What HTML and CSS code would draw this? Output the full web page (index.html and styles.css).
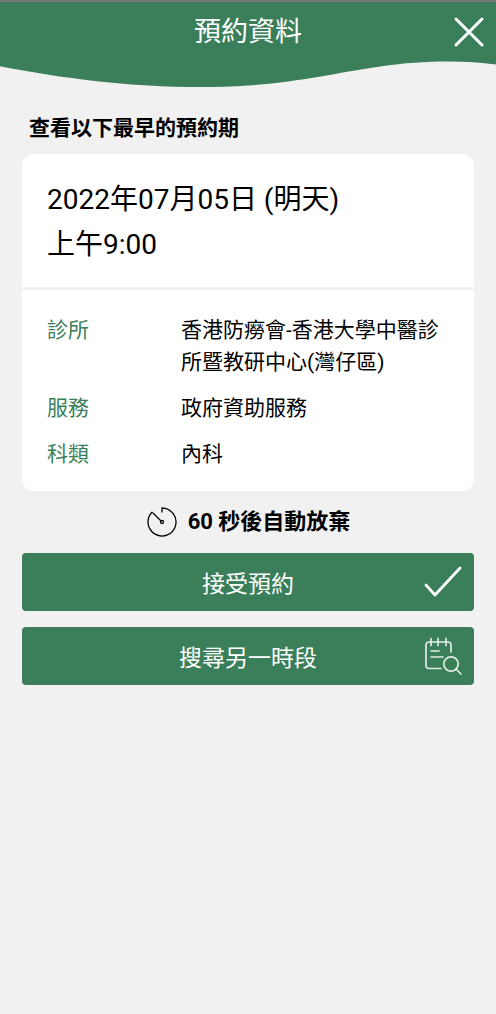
FILE: index.html
```html
<!DOCTYPE html>
<html lang="zh-Hant">
<head>
<meta charset="utf-8">
<meta name="viewport" content="width=device-width, initial-scale=1">
<title>預約資料</title>
<link rel="stylesheet" href="styles.css">
</head>
<body>
<header class="header">
  <div class="bar">
    <h1 class="title">預約資料</h1>
    <button class="close" type="button" aria-label="關閉">
      <svg width="32" height="32" viewBox="0 0 32 32" fill="none" stroke="currentColor" stroke-width="3" stroke-linecap="round"><path d="M3 3L29 29M29 3L3 29"/></svg>
    </button>
  </div>
  <svg class="wave" viewBox="0 0 496 28" preserveAspectRatio="none" aria-hidden="true"><path d="M0 0H496V4.500C465 .5 425 0 380 6.500C335 13 300 22 248 25.500C165 31 75 21 0 6.200Z"/></svg>
</header>
<main class="content">
  <h2 class="subtitle">查看以下最早的預約期</h2>
  <section class="card">
    <p class="when">2022年07月05日 (明天)<br>上午9:00</p>
    <dl class="details">
      <dt>診所</dt><dd>香港防癆會-香港大學中醫診所暨教研中心(灣仔區)</dd>
      <dt>服務</dt><dd>政府資助服務</dd>
      <dt>科類</dt><dd>內科</dd>
    </dl>
  </section>
  <p class="timer">
    <svg width="32" height="32" viewBox="0 0 32 32" fill="none" stroke="currentColor" stroke-width="1.300" stroke-linecap="round" stroke-linejoin="round" aria-hidden="true"><path d="M16 6V2A14 14 0 1 1 6 6.200"/><path d="M7 7L15 15"/><circle cx="16" cy="16" r="1.500"/></svg>
    <span>60 秒後自動放棄</span>
  </p>
  <div class="actions">
    <button class="action" type="button">
      <span>接受預約</span>
      <svg width="38" height="38" viewBox="0 0 38 38" fill="none" stroke="currentColor" stroke-width="2.800" stroke-linecap="round" stroke-linejoin="round" aria-hidden="true"><path d="M2 22L11 32L36 5"/></svg>
    </button>
    <button class="action" type="button">
      <span>搜尋另一時段</span>
      <svg width="38" height="38" viewBox="0 0 38 38" fill="none" stroke="currentColor" stroke-opacity=".85" stroke-width="1.700" stroke-linecap="round" stroke-linejoin="round" aria-hidden="true"><path d="M17 31.500H5Q2 31.500 2 28.500V8Q2 5 5 5H24Q27 5 27 8V15M7 1.500V8.500M14 1.500V8.500M22 1.500V8.500M7 14H15M7 20H19"/><circle cx="27" cy="27" r="7.200"/><path d="M32 32L37 37"/></svg>
    </button>
  </div>
</main>
</body>
</html>
```

FILE: styles.css
```css
* {
  box-sizing: border-box;
}

body {
  margin: 0;
  background: #f1f1f1;
  color: #000;
  font-family: Roboto, "Noto Sans CJK TC", sans-serif;
  font-size: 21px;
  line-height: 32px;
}

h1, h2, p, dl, dd {
  margin: 0;
}

svg {
  display: block;
}

button {
  border: 0;
  color: #fff;
  font-family: inherit;
  cursor: pointer;
}

.header {
  border-top: 2px solid #777;
}

.bar {
  display: grid;
  grid-template-columns: 48px 1fr 48px;
  align-items: center;
  height: 58px;
  padding: 2px 3px 0;
  background: #3b7f5a;
  color: #fff;
}

.title {
  grid-column: 2;
  font-size: 27px;
  font-weight: 400;
  text-align: center;
}

.close {
  display: grid;
  place-items: center;
  height: 48px;
  padding: 0;
  background: none;
}

.wave {
  width: 100%;
  height: 28px;
  fill: #3b7f5a;
}

.content {
  padding: 24px 22px;
}

.subtitle {
  padding: 0 7px;
  font-size: 21px;
  font-weight: 700;
}

.card {
  margin-top: 10px;
  border-radius: 12px;
  background: #fff;
}

.when {
  padding: 23px 25px 20px;
  border-bottom: 3px solid #f1f1f1;
  font-size: 28px;
  line-height: 45px;
}

.details {
  display: grid;
  grid-template-columns: 134px 1fr;
  row-gap: 14px;
  padding: 24px 25px 21px;
}

.details dt {
  color: #3b7f5a;
}

.timer {
  display: flex;
  align-items: center;
  justify-content: center;
  gap: 10px;
  padding: 15px 0;
  font-size: 22px;
  font-weight: 700;
}

.actions {
  display: grid;
  gap: 16px;
}

.action {
  display: grid;
  grid-template-columns: 38px 1fr 38px;
  align-items: center;
  height: 58px;
  padding: 0 12px;
  border-radius: 4px;
  background: #3b7f5a;
  font-size: 23px;
}

.action span {
  grid-column: 2;
}
```
